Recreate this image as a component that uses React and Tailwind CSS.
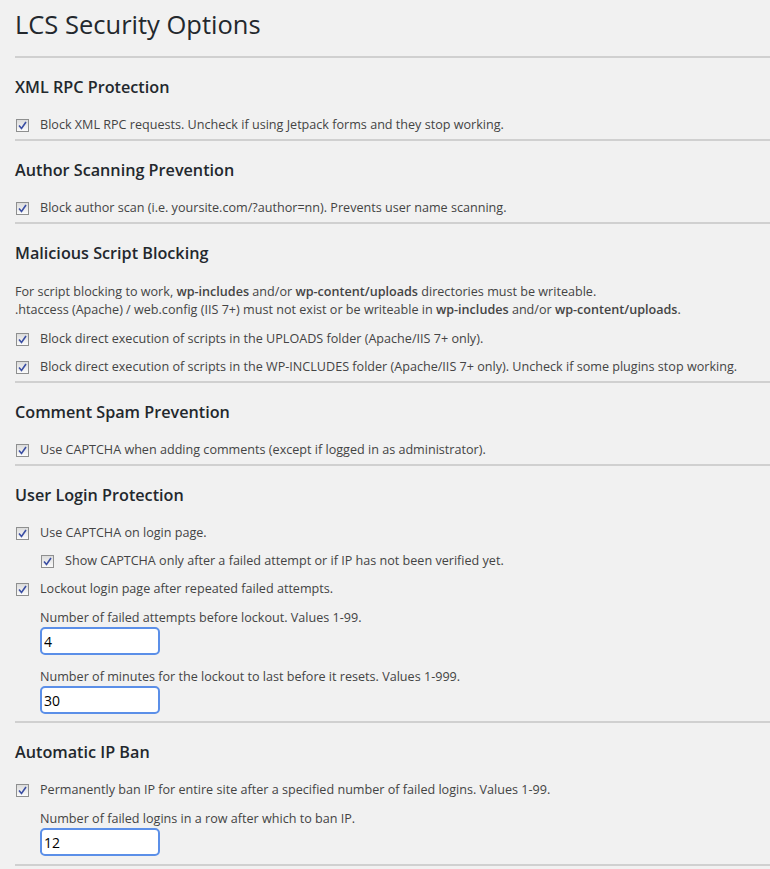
import React, { useState } from "react";

const font = { fontFamily: '"Open Sans", "Noto Sans", sans-serif' };

function Box({ checked, onChange }) {
  return (
    <span
      onClick={onChange}
      className="w-[13px] h-[13px] shrink-0 border border-[#8e8f8f] bg-gradient-to-b from-[#dcdcdc] to-[#fbfbfb] flex items-center justify-center cursor-pointer"
    >
      {checked && (
        <svg width="9" height="9" viewBox="0 0 9 9">
          <path d="M1 4.5 L3.5 7.5 L8 1" fill="none" stroke="#3a4ea3" strokeWidth="1.6" />
        </svg>
      )}
    </span>
  );
}

function Check({ label, indent }) {
  const [on, setOn] = useState(true);
  return (
    <label className={`flex items-center h-[28px] gap-[11px] ${indent ? "pl-[26px]" : "pl-px"}`}>
      <Box checked={on} onChange={() => setOn(!on)} />
      <span>{label}</span>
    </label>
  );
}

function Field({ label, value, top }) {
  const [v, setV] = useState(value);
  return (
    <div className={`pl-[25px] ${top}`}>
      <div className="h-[18px] leading-[18px]">{label}</div>
      <input
        value={v}
        onChange={(e) => setV(e.target.value)}
        className="w-[120px] h-[28px] bg-white border-2 border-[#5b8fe8] rounded-[5px] px-[2px] text-[14px] text-black outline-none"
      />
    </div>
  );
}

function Section({ title, children }) {
  return (
    <section className="border-t-2 border-[#d0d0d0] pt-[17px]">
      <h2 className="text-[16.2px] leading-[24px] font-semibold text-[#23282d] mb-[12px]">{title}</h2>
      {children}
    </section>
  );
}

export default function App() {
  return (
    <div style={font} className="min-h-[869px] bg-[#f1f1f1] pl-[15px] text-[12.6px] text-[#444] overflow-hidden">
      <h1 className="text-[25.5px] leading-[36px] pt-[6px] pb-[14px] text-[#23282d]">LCS Security Options</h1>

      <Section title="XML RPC Protection">
        <Check label="Block XML RPC requests. Uncheck if using Jetpack forms and they stop working." />
      </Section>

      <Section title="Author Scanning Prevention">
        <Check label="Block author scan (i.e. yoursite.com/?author=nn). Prevents user name scanning." />
      </Section>

      <Section title="Malicious Script Blocking">
        <p className="leading-[18px] mt-[18px] mb-[6px]">
          For script blocking to work, <b className="font-semibold">wp-includes</b> and/or{" "}
          <b className="font-semibold">wp-content/uploads</b> directories must be writeable.
          <br />
          .htaccess (Apache) / web.config (IIS 7+) must not exist or be writeable in{" "}
          <b className="font-semibold">wp-includes</b> and/or <b className="font-semibold">wp-content/uploads</b>.
        </p>
        <Check label="Block direct execution of scripts in the UPLOADS folder (Apache/IIS 7+ only)." />
        <Check label="Block direct execution of scripts in the WP-INCLUDES folder (Apache/IIS 7+ only). Uncheck if some plugins stop working." />
      </Section>

      <Section title="Comment Spam Prevention">
        <Check label="Use CAPTCHA when adding comments (except if logged in as administrator)." />
      </Section>

      <Section title="User Login Protection">
        <Check label="Use CAPTCHA on login page." />
        <Check indent label="Show CAPTCHA only after a failed attempt or if IP has not been verified yet." />
        <Check label="Lockout login page after repeated failed attempts." />
        <Field top="mt-[6px]" label="Number of failed attempts before lockout. Values 1-99." value="4" />
        <Field top="mt-[13px]" label="Number of minutes for the lockout to last before it resets. Values 1-999." value="30" />
        <div className="h-[7px]" />
      </Section>

      <Section title="Automatic IP Ban">
        <Check label="Permanently ban IP for entire site after a specified number of failed logins. Values 1-99." />
        <Field top="mt-[6px]" label="Number of failed logins in a row after which to ban IP." value="12" />
        <div className="h-[8px]" />
      </Section>
      <div className="border-t-2 border-[#d0d0d0] h-[10px]" />
    </div>
  );
}
